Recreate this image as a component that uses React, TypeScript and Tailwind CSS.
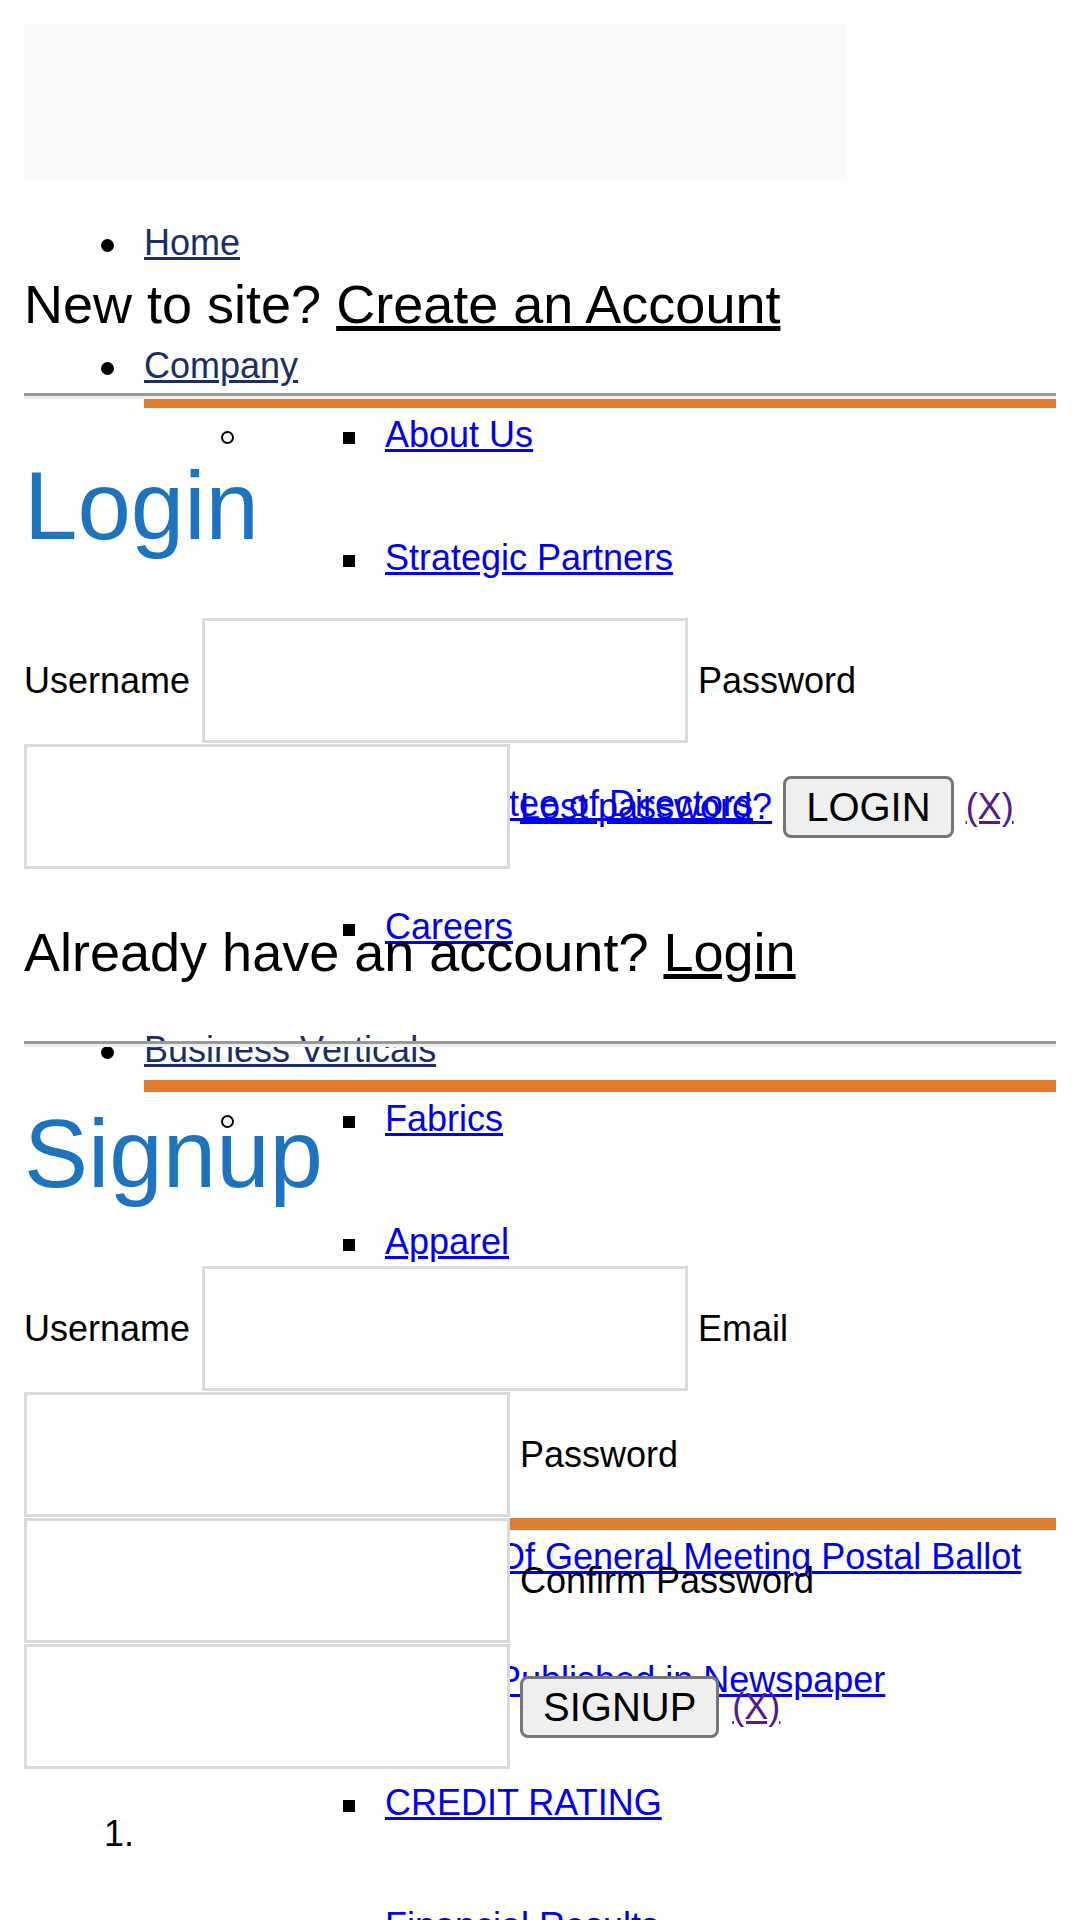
import React from "react";

type SubGroup = { items: string[] };

const topNav: Array<{ label: string; sub?: SubGroup }> = [
  { label: "Home" },
  {
    label: "Company",
    sub: {
      items: ["About Us", "Strategic Partners", "Board of Directors", "Committee of Directors", "Careers"],
    },
  },
  {
    label: "Business Verticals",
    sub: { items: ["Fabrics", "Apparel", "Home Textiles"] },
  },
  {
    label: "Investor Relations",
    sub: {
      items: [
        "Notice Of General Meeting Postal Ballot",
        "Notice Published in Newspaper",
        "CREDIT RATING",
        "Financial Results",
      ],
    },
  },
];

// list markers drawn by hand so their size and offset match the page
const Disc = () => <span className="absolute left-[-43px] top-[17px] h-[13px] w-[13px] rounded-full bg-black" />;
const Circle = () => (
  <span className="absolute left-[-43px] top-[17px] h-[13px] w-[13px] rounded-full border-[2.5px] border-black" />
);
const Square = () => <span className="absolute left-[-42px] top-[18px] h-[12px] w-[12px] bg-black" />;

function NavLayer() {
  return (
    <div className="px-[24px] pt-[24px]">
      <div className="h-[156px] w-[823px] bg-[#fafafa]" />
      <ul className="pl-[120px] pt-[42px] text-[36px] leading-[41px]">
        {topNav.map((item) => (
          <li key={item.label} className={`relative ${item.sub ? "" : "mb-[82px]"}`}>
            <Disc />
            <a href="#" className="text-[#1b2f64] underline">
              {item.label}
            </a>
            {item.sub && (
              <ul className="mt-[10px] border-t-[12px] border-[#e07b30] pl-[120px] pt-[6px]">
                <li className="relative">
                  <Circle />
                  <ul className="pl-[121px]">
                    {item.sub.items.map((s) => (
                      <li key={s} className="relative mb-[82px] whitespace-nowrap">
                        <Square />
                        <a href="#" className="text-[#0000ee] underline">
                          {s}
                        </a>
                      </li>
                    ))}
                  </ul>
                </li>
              </ul>
            )}
          </li>
        ))}
      </ul>
    </div>
  );
}

function Rule() {
  return <hr className="h-[6px] border-0 border-t-[3px] border-t-[#9a9a9a] bg-[#eeeeee]" />;
}

function Field({ className = "" }: { className?: string }) {
  return (
    <input
      type="text"
      className={`h-[125px] w-[486px] shrink-0 border-[3px] border-[#dadada] bg-white ${className}`}
    />
  );
}

function FormButton({ label, className = "" }: { label: string; className?: string }) {
  return (
    <button
      type="button"
      className={`rounded-[8px] border-[3px] border-[#767676] bg-[#efefef] px-[20px] py-[5px] text-[40px] leading-[46px] text-black ${className}`}
    >
      {label}
    </button>
  );
}

function CloseLink({ className = "" }: { className?: string }) {
  return (
    <a href="#" className={`text-[#551a8b] underline ${className}`}>
      (X)
    </a>
  );
}

function FormLayer() {
  return (
    <div className="absolute inset-x-0 top-0 z-10 px-[24px] pt-[273px] text-[36px] leading-[41px] text-black">
      <p className="text-[54px] leading-[62px]">
        New to site?{" "}
        <a href="#" className="underline">
          Create an Account
        </a>
      </p>
      <div className="mt-[58px]">
        <Rule />
      </div>
      <h2 className="mt-[52px] text-[96px] font-normal leading-[110px] text-[#1e73be]">Login</h2>
      <form className="mt-[57px]">
        <div className="mb-[1px] flex items-center">
          <span>Username</span>
          <Field className="ml-[12px]" />
          <span className="ml-[10px]">Password</span>
        </div>
        <div className="flex items-center">
          <Field />
          <a href="#" className="ml-[10px] text-[#0000ee] underline">
            Lost password?
          </a>
          <FormButton label="LOGIN" className="ml-[11px]" />
          <CloseLink className="ml-[12px]" />
        </div>
      </form>

      <p className="mt-[52px] text-[54px] leading-[62px]">
        Already have an account?{" "}
        <a href="#" className="underline">
          Login
        </a>
      </p>
      <div className="mt-[58px]">
        <Rule />
      </div>
      <h2 className="mt-[52px] text-[96px] font-normal leading-[110px] text-[#1e73be]">Signup</h2>
      <form className="mt-[57px]">
        <div className="mb-[1px] flex items-center">
          <span>Username</span>
          <Field className="ml-[12px]" />
          <span className="ml-[10px]">Email</span>
        </div>
        <div className="mb-[1px] flex items-center">
          <Field />
          <span className="ml-[10px]">Password</span>
        </div>
        <div className="mb-[1px] flex items-center">
          <Field />
          <span className="ml-[10px]">Confirm Password</span>
        </div>
        <div className="flex items-center">
          <Field />
          <FormButton label="SIGNUP" className="ml-[10px]" />
          <CloseLink className="ml-[13px]" />
        </div>
      </form>

      <ol className="mt-[44px] list-decimal pl-[120px]">
        <li>{"\u00a0"}</li>
      </ol>
    </div>
  );
}

export default function App() {
  return (
    <div className="relative h-[1920px] w-[1080px] overflow-hidden bg-white font-['Liberation_Sans',Arial,sans-serif]">
      <NavLayer />
      <FormLayer />
    </div>
  );
}
